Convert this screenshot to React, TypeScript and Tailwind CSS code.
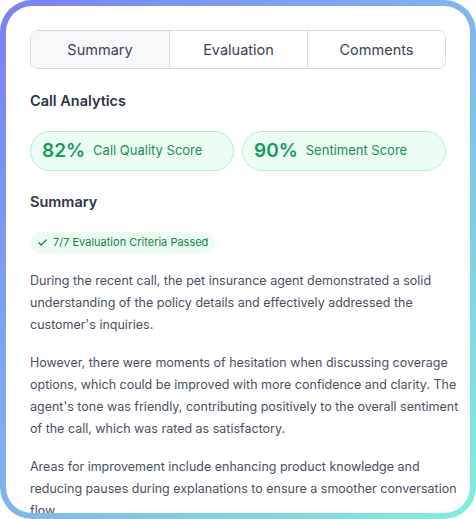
import React from 'react';

const App = () => {
  const tabs = ["Summary", "Evaluation", "Comments"];
  const scores = [
    { value: "82%", label: "Call Quality Score" },
    { value: "90%", label: "Sentiment Score" }
  ];
  // lines broken as in the design
  const paragraphs = [
    [
      "During the recent call, the pet insurance agent demonstrated a solid",
      "understanding of the policy details and effectively addressed the",
      "customer's inquiries."
    ],
    [
      "However, there were moments of hesitation when discussing coverage",
      "options, which could be improved with more confidence and clarity. The",
      "agent's tone was friendly, contributing positively to the overall sentiment",
      "of the call, which was rated as satisfactory."
    ],
    [
      "Areas for improvement include enhancing product knowledge and",
      "reducing pauses during explanations to ensure a smoother conversation",
      "flow."
    ]
  ];

  return (
    <div className="w-[476px] h-[519px] bg-white font-['Inter',sans-serif]">
      {/* gradient frame */}
      <div className="h-full rounded-[32px] bg-linear-to-br from-[#7a80f6] via-[#7fb6ec] to-[#7ff0da] p-[6px]">
        <div className="h-full rounded-[26px] bg-white overflow-hidden px-6 pt-6">
          {/* tabs */}
          <div className="grid grid-cols-3 h-[39px] border border-[#d6dae1] rounded-lg overflow-hidden">
            {tabs.map((tab, index) => (
              <div
                key={index}
                className={`flex items-center justify-center text-[14.5px] text-[#3b4254] ${index === 0 ? 'bg-[#f7f8fa]' : 'bg-white border-l border-[#d6dae1]'}`}
              >
                {tab}
              </div>
            ))}
          </div>

          <h2 className="mt-[21px] text-[14.5px] leading-[22px] font-semibold text-[#2e3546]">
            Call Analytics
          </h2>

          {/* scores */}
          <div className="mt-[19px] grid grid-cols-2 gap-2">
            {scores.map((score, index) => (
              <div
                key={index}
                className="flex items-center h-10 rounded-full bg-[#ecfdf3] border border-[#b5f0cc] pl-[11px]"
              >
                <span className="text-[19px] font-semibold text-[#129a5c]">{score.value}</span>
                <span className="ml-2 text-[13px] text-[#16904f]">{score.label}</span>
              </div>
            ))}
          </div>

          <h2 className="mt-[20px] text-[14.5px] leading-[22px] font-semibold text-[#2e3546]">
            Summary
          </h2>

          <div className="mt-[19px] inline-flex items-center h-[21px] rounded-full bg-[#ecfdf3] px-[7px] text-[11px] text-[#16804a]">
            <svg viewBox="0 0 24 24" className="w-[11px] h-[11px] mr-[5px]" fill="none" stroke="currentColor" strokeWidth="2.5" strokeLinecap="round" strokeLinejoin="round">
              <path d="M4 12.5l5 5L20 6.5" />
            </svg>
            7/7 Evaluation Criteria Passed
          </div>

          <div className="mt-[16px] space-y-4">
            {paragraphs.map((lines, index) => (
              <p key={index} className="text-[12.5px] leading-[22px] text-[#4a5062] whitespace-nowrap">
                {lines.map((line, lineIndex) => (
                  <React.Fragment key={lineIndex}>
                    {line}
                    {lineIndex < lines.length - 1 && <br />}
                  </React.Fragment>
                ))}
              </p>
            ))}
          </div>
        </div>
      </div>
    </div>
  );
};

export default App;
